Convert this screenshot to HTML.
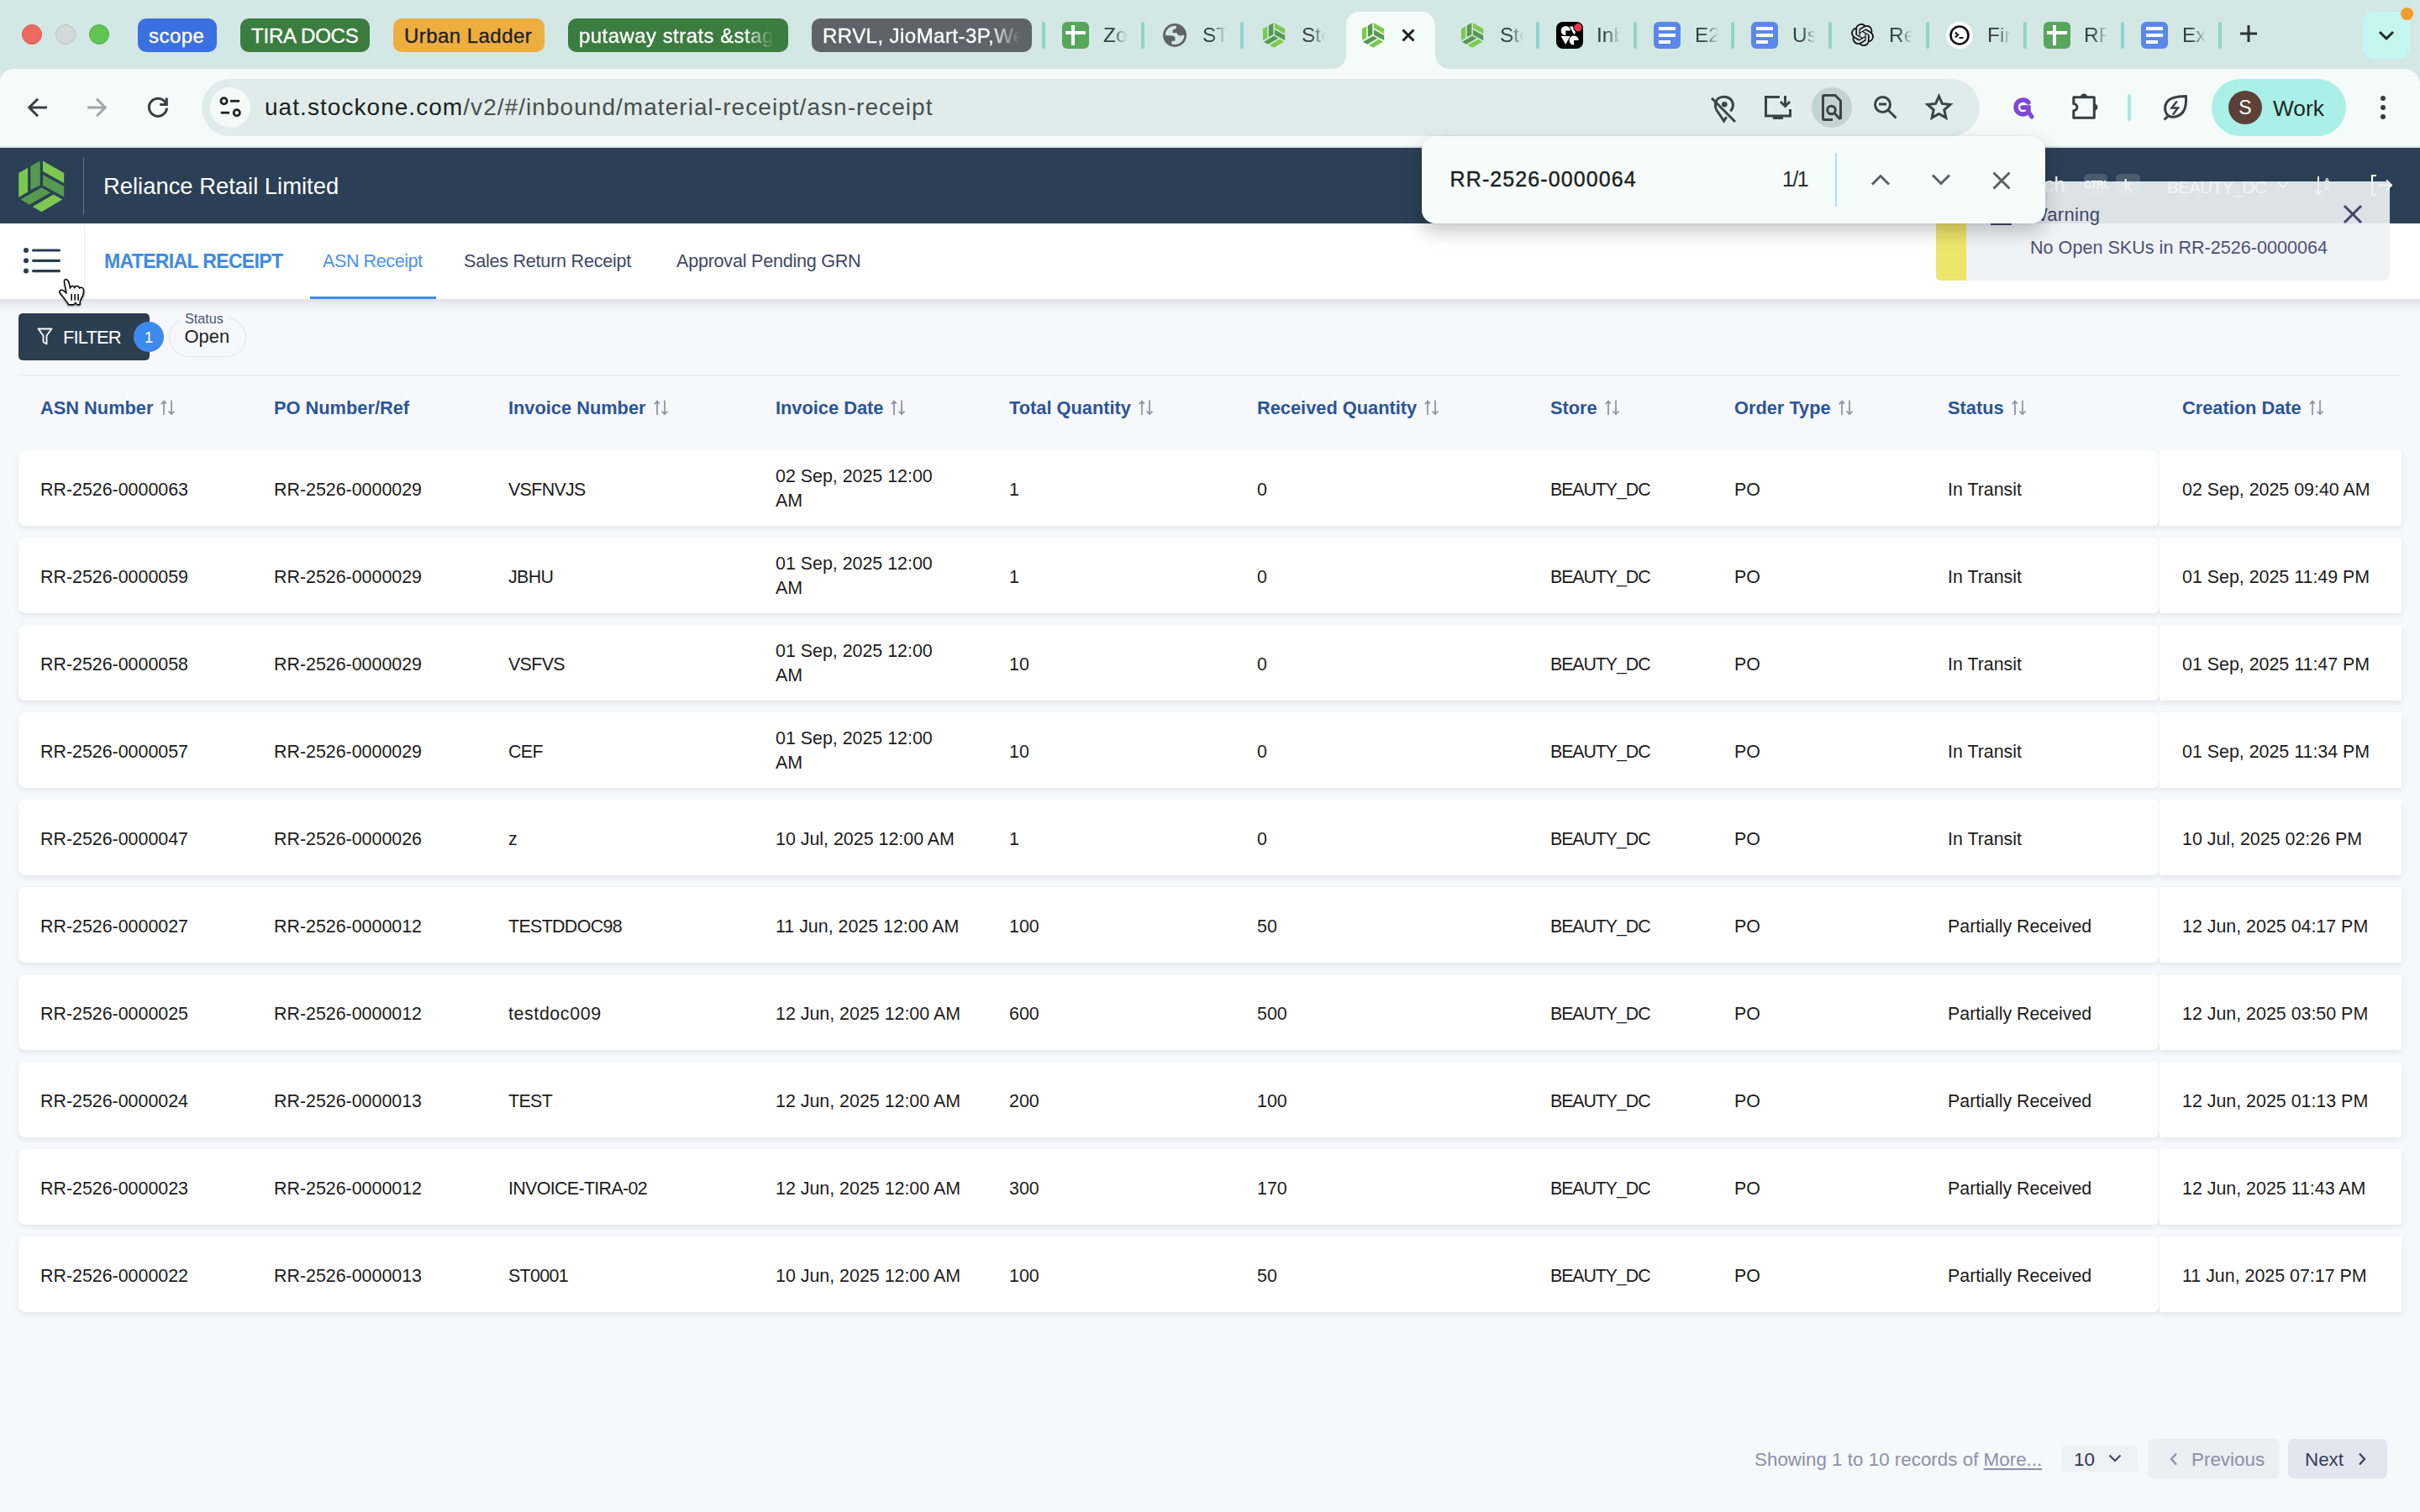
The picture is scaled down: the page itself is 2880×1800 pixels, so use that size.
<!DOCTYPE html>
<html><head><meta charset="utf-8">
<style>
*{box-sizing:border-box;margin:0;padding:0}
html,body{width:2880px;height:1800px;overflow:hidden;background:#f7f8fb;font-family:"Liberation Sans",sans-serif;position:relative}
.a{position:absolute}
svg{position:absolute;overflow:visible}
#tabstrip{position:absolute;left:0;top:0;width:2880px;height:100px;background:#d3e7e4}
#toolbar{position:absolute;left:0;top:82px;width:2880px;height:94px;background:#f5fbf9;border-radius:16px 18px 0 0}
.dot{position:absolute;top:29px;width:24px;height:24px;border-radius:50%}
.grp{position:absolute;top:22px;height:40px;border-radius:10px;font-size:24px;line-height:41px;white-space:nowrap;overflow:hidden;padding-left:13px;letter-spacing:0.45px;-webkit-text-stroke:0.35px currentColor}
.fade{-webkit-mask-image:linear-gradient(to right,#000 0,#000 calc(100% - 36px),transparent 100%)}
.sep{position:absolute;top:26px;width:4px;height:32px;background:#8fd4ca;border-radius:2px}
.tt{position:absolute;top:0;height:82px;line-height:83px;font-size:24.5px;color:#32403e;white-space:nowrap;overflow:hidden;width:28px;-webkit-mask-image:linear-gradient(to right,#000 40%,transparent 100%)}
.ic{position:absolute;top:26px;width:32px;height:32px;border-radius:6px}
.sheet{background:#58a65c}
.sheet:before{content:"";position:absolute;left:4px;top:11px;width:24px;height:4px;background:#fff}
.sheet:after{content:"";position:absolute;left:11px;top:4px;width:4px;height:24px;background:#fff}
.doc{background:#5a87ea}
.doc i{position:absolute;left:6px;height:4px;background:#fff}
#header{position:absolute;left:0;top:176px;width:2880px;height:90px;background:#2b4056}
#subnav{position:absolute;left:0;top:266px;width:2880px;height:90px;background:#fff}
.th{position:absolute;top:472.9px;font-size:21.8px;font-weight:bold;color:#2a5597;white-space:nowrap;line-height:26px}
.th svg{position:relative;display:inline-block;vertical-align:middle;margin-left:9px;top:-2px}
.row{position:absolute;left:22px;width:2548px;height:90px;background:#fff;border-radius:8px;box-shadow:0 3px 6px rgba(0,0,0,0.075)}
.rowst{position:absolute;left:2570px;width:288px;height:90px;background:#fff;border-radius:0 2px 2px 0;box-shadow:0 3px 6px rgba(0,0,0,0.075)}
.td{position:absolute;font-size:21.4px;color:#1c1c1c;white-space:nowrap;line-height:29px}
.td2{line-height:29px}
</style></head>
<body>
<div id="tabstrip">
  <div class="dot" style="left:26px;background:#ed6a5e;border:1px solid #d35a4f"></div>
  <div class="dot" style="left:66px;background:#d2d9d8;border:1px solid #b6bfbe"></div>
  <div class="dot" style="left:106px;background:#61c554;border:1px solid #4fae45"></div>
  <div class="grp" style="left:164px;width:94px;background:#3a70e0;color:#fff;padding-left:13px">scope</div>
  <div class="grp" style="left:286px;width:154px;background:#3b7c3f;color:#fff;letter-spacing:-0.2px">TIRA DOCS</div>
  <div class="grp" style="left:468px;width:180px;background:#eeae3f;color:#1e1e1e">Urban Ladder</div>
  <div class="grp" style="left:676px;width:262px;background:#3b7c3f;color:#fff"><span class="fade" style="display:block;width:232px;overflow:hidden">putaway strats &amp;stag</span></div>
  <div class="grp" style="left:966px;width:262px;background:#5f6368;color:#fff"><span class="fade" style="display:block;width:235px;overflow:hidden">RRVL, JioMart-3P,Wel</span></div>

  <div class="sep" style="left:1240px"></div>
  <div class="ic sheet" style="left:1264px"></div>
  <div class="tt" style="left:1313px">Zoho</div>
  <div class="sep" style="left:1358px"></div>
  <svg style="left:1375px;top:20px" width="50" height="45" viewBox="0 0 50 45"><circle cx="23.07" cy="21.9" r="12.6" fill="none" stroke="#5f6368" stroke-width="2.8"/><path fill="#5f6368" d="M25.2 9.8 L24.7 14 L20.8 15.5 L20.5 19 L25.6 19.3 C26 21.5 28 22.8 30 22.5 L35.36 21.34 A12.3 12.3 0 0 0 25.2 9.8 Z M10.77 22 L20.5 22.6 C22.5 23 23.5 24.5 23.5 25.3 L23.5 28.6 L19.6 28.9 L19 33.5 A12.3 12.3 0 0 1 10.77 22 Z"/></svg>
  <div class="tt" style="left:1431px">STO</div>
  <div class="sep" style="left:1476px"></div>
  <svg style="left:1502px;top:27px" width="28" height="30" viewBox="220 190 1000 1140"><g id="lg"><polygon points="225,465 425,350 425,880 225,995" fill="#7dc94f"/><polygon points="485,320 695,200 695,735 485,835" fill="#559a4d"/><polygon points="755,200 1220,465 1220,690 755,430" fill="#7dc94f"/><polygon points="755,505 1220,760 1220,990 755,740" fill="#559a4d"/><polygon points="265,1050 725,785 925,895 460,1165" fill="#559a4d"/><polygon points="530,1205 990,935 1185,1050 725,1320" fill="#7dc94f"/></g></svg>
  <div class="tt" style="left:1549px">Stock</div>

  <!-- active tab -->
  <svg style="left:1584px;top:14px" width="142" height="68" viewBox="0 0 142 68"><path d="M0 68 C10 68 18 62 18 50 L18 16 C18 7 25 0 34 0 L108 0 C117 0 124 7 124 16 L124 50 C124 62 132 68 142 68 Z" fill="#f5fbf9"/></svg>
  <svg style="left:1620px;top:27px" width="28" height="30" viewBox="220 190 1000 1140"><use href="#lg"/></svg>
  <svg style="left:1668px;top:34px" width="16" height="16" viewBox="0 0 16 16"><path d="M1.5 1.5 L14.5 14.5 M14.5 1.5 L1.5 14.5" stroke="#1f2221" stroke-width="3"/></svg>

  <svg style="left:1738px;top:27px" width="28" height="30" viewBox="220 190 1000 1140"><use href="#lg"/></svg>
  <div class="tt" style="left:1785px">Stock</div>
  <div class="sep" style="left:1828px"></div>
  <svg style="left:1852px;top:26px" width="32" height="32" viewBox="0 0 32 32"><rect width="32" height="32" rx="8" fill="#000"/><g fill="#fff"><path d="M11.3 10.5 L16.9 10.5 A5.6 5.6 0 1 0 11.3 16.1 Z"/><path d="M21.1 22 L26.7 22 A5.6 5.6 0 1 0 21.1 27.6 Z"/><path d="M5.6 16.9 L16.5 16.9 L11.3 27.1 Z"/><path d="M16 5.5 L20 5.5 L23.1 12.4 L21.3 15.3 Z"/></g><circle cx="26" cy="6.7" r="5.8" fill="#000"/><circle cx="26" cy="6.7" r="4.7" fill="#e8364a"/></svg>
  <div class="tt" style="left:1900px">Inbox</div>
  <div class="sep" style="left:1944px"></div>
  <div class="ic doc" style="left:1968px"><i style="top:6px;width:20px"></i><i style="top:14px;width:20px"></i><i style="top:22px;width:14px"></i></div>
  <div class="tt" style="left:2017px">E2E</div>
  <div class="sep" style="left:2060px"></div>
  <div class="ic doc" style="left:2084px"><i style="top:6px;width:20px"></i><i style="top:14px;width:20px"></i><i style="top:22px;width:14px"></i></div>
  <div class="tt" style="left:2133px">Usage</div>
  <div class="sep" style="left:2176px"></div>
  <svg style="left:2203px;top:28px" width="27" height="27" viewBox="0 0 24 24"><path fill="#111" d="M22.28 9.82a5.98 5.98 0 0 0-.52-4.91 6.05 6.05 0 0 0-6.51-2.9A6.07 6.07 0 0 0 4.98 4.18a5.98 5.98 0 0 0-4 2.9 6.05 6.05 0 0 0 .74 7.1 5.98 5.98 0 0 0 .51 4.91 6.05 6.05 0 0 0 6.51 2.9A5.98 5.98 0 0 0 13.26 24a6.06 6.06 0 0 0 5.77-4.21 5.99 5.99 0 0 0 4-2.9 6.06 6.06 0 0 0-.75-7.07zm-9.02 12.61a4.48 4.48 0 0 1-2.88-1.04l.14-.08 4.78-2.76a.8.8 0 0 0 .39-.68v-6.74l2.02 1.17a.07.07 0 0 1 .04.05v5.58a4.5 4.5 0 0 1-4.49 4.5zm-9.66-4.13a4.47 4.47 0 0 1-.54-3.01l.14.09 4.78 2.76a.77.77 0 0 0 .78 0l5.84-3.37v2.33a.08.08 0 0 1-.03.06L9.74 19.95a4.5 4.5 0 0 1-6.14-1.65zM2.34 7.9a4.49 4.49 0 0 1 2.37-1.97V11.6a.77.77 0 0 0 .39.68l5.81 3.35-2.02 1.17a.08.08 0 0 1-.07 0l-4.83-2.79A4.5 4.5 0 0 1 2.34 7.87zm16.6 3.86-5.84-3.39L15.12 7.2a.08.08 0 0 1 .07 0l4.83 2.79a4.49 4.49 0 0 1-.68 8.1v-5.68a.79.79 0 0 0-.4-.67zm2.01-3.02-.14-.09-4.77-2.78a.78.78 0 0 0-.79 0L9.41 9.23V6.9a.07.07 0 0 1 .03-.06l4.83-2.79a4.5 4.5 0 0 1 6.68 4.66zM8.31 12.86 6.29 11.7a.08.08 0 0 1-.04-.06V6.07a4.5 4.5 0 0 1 7.38-3.45l-.14.08L8.71 5.46a.8.8 0 0 0-.39.68zm1.1-2.37 2.6-1.5 2.6 1.5v3l-2.6 1.5-2.6-1.5z"/></svg>
  <div class="tt" style="left:2248px">Rels</div>
  <div class="sep" style="left:2292px"></div>
  <svg style="left:2316px;top:26px" width="32" height="32" viewBox="0 0 32 32"><circle cx="16" cy="16" r="16" fill="#fff"/><circle cx="16" cy="16" r="10.5" fill="none" stroke="#111" stroke-width="2.6"/><path d="M11 12.5 L14 15.5 L11 18.5 M15.5 19 L20.5 19" fill="none" stroke="#111" stroke-width="2.2"/></svg>
  <div class="tt" style="left:2365px">Find</div>
  <div class="sep" style="left:2408px"></div>
  <div class="ic sheet" style="left:2432px"></div>
  <div class="tt" style="left:2480px">RF</div>
  <div class="sep" style="left:2524px"></div>
  <div class="ic doc" style="left:2548px"><i style="top:6px;width:20px"></i><i style="top:14px;width:20px"></i><i style="top:22px;width:14px"></i></div>
  <div class="tt" style="left:2597px">Exe</div>
  <div class="sep" style="left:2640px"></div>
  <svg style="left:2664px;top:28px" width="24" height="24" viewBox="0 0 24 24"><path d="M12 2 V22 M2 12 H22" stroke="#2c3533" stroke-width="3"/></svg>
  <div class="a" style="left:2812px;top:14px;width:56px;height:56px;border-radius:14px;background:#c4f7f0"></div>
  <svg style="left:2829px;top:35px" width="22" height="14" viewBox="0 0 22 14"><path d="M3 3 L11 11 L19 3" fill="none" stroke="#222a29" stroke-width="3"/></svg>
  <div class="a" style="left:2857px;top:9px;width:15px;height:15px;border-radius:50%;background:#f59d2a"></div>
</div>
<div id="toolbar">
</div>
<div class="a" style="left:0;top:174px;width:2880px;height:2px;background:#d9e0df"></div>
<!-- nav buttons -->
<svg style="left:32px;top:116px" width="24" height="24" viewBox="0 0 24 24"><path d="M24 12 H3 M13 1.8 L2.8 12 L13 22.2" fill="none" stroke="#34403e" stroke-width="3"/></svg>
<svg style="left:104px;top:116px" width="24" height="24" viewBox="0 0 24 24"><path d="M0 12 H21 M11 1.8 L21.2 12 L11 22.2" fill="none" stroke="#a1a7a6" stroke-width="3"/></svg>
<svg style="left:176px;top:116px" width="24" height="24" viewBox="0 0 24 24"><path d="M22.56 12.72 A10.6 10.6 0 1 1 20.7 5.7 L22.3 8.5" fill="none" stroke="#34403e" stroke-width="3"/><path d="M22.3 0.4 V8.5 H14.3" fill="none" stroke="#34403e" stroke-width="3"/></svg>
<!-- url bar -->
<div class="a" style="left:240px;top:94px;width:2116px;height:68px;border-radius:34px;background:#dfecea"></div>
<div class="a" style="left:250px;top:104px;width:48px;height:48px;border-radius:50%;background:#f3faf8"></div>
<svg style="left:258px;top:112px" width="32" height="32" viewBox="0 0 32 32"><circle cx="8.5" cy="8.3" r="3.6" fill="none" stroke="#222" stroke-width="2.8"/><path d="M16 8.3 H27" stroke="#222" stroke-width="2.8"/><path d="M4.8 22.2 H15" stroke="#222" stroke-width="2.8"/><circle cx="23.8" cy="22.2" r="3.6" fill="none" stroke="#222" stroke-width="2.8"/></svg>
<div class="a" style="left:315px;top:106.3px;font-size:28px;line-height:44px;letter-spacing:1.05px;color:#474f4d;white-space:nowrap"><span style="color:#1b2321">uat.stockone.com</span>/v2/#/inbound/material-receipt/asn-receipt</div>
<!-- url bar icons -->
<svg style="left:2036px;top:114px" width="30" height="32" viewBox="0 0 30 32"><path d="M6.5 16.5 C4.5 12 5 5 10 2.5 C15 0 22 1 25 6 C27.5 10 26.5 14.5 23.5 18.5" fill="none" stroke="#3a4442" stroke-width="3"/><path d="M6.5 16.5 L15.6 30 L18.6 25.3" fill="none" stroke="#3a4442" stroke-width="3" stroke-linejoin="miter"/><circle cx="16.3" cy="10.2" r="3.3" fill="#3a4442"/><path d="M1 2.7 L29 31" stroke="#3a4442" stroke-width="3"/></svg>
<svg style="left:2100px;top:114px" width="32" height="28" viewBox="0 0 32 28"><path d="M18 1.5 H1.5 V24 H30.5 V16" fill="none" stroke="#3a4442" stroke-width="3"/><rect x="10" y="23" width="12" height="5" fill="#3a4442"/><path d="M24.5 0 V12 M19 7 L24.5 12.5 L30 7" fill="none" stroke="#3a4442" stroke-width="3"/></svg>
<div class="a" style="left:2156px;top:104px;width:48px;height:48px;border-radius:50%;background:#c4d3d0"></div>
<svg style="left:2168px;top:112px" width="24" height="32" viewBox="0 0 24 32"><path d="M13 30.5 H3 C2 30.5 1.5 30 1.5 29 V3 C1.5 2 2 1.5 3 1.5 H16 L22.5 8 V30" fill="none" stroke="#3a4442" stroke-width="3"/><circle cx="11.5" cy="19" r="4.8" fill="none" stroke="#3a4442" stroke-width="3"/><path d="M15 22.5 L22 30" stroke="#3a4442" stroke-width="3"/></svg>
<svg style="left:2230px;top:114px" width="28" height="28" viewBox="0 0 28 28"><circle cx="10.5" cy="10.5" r="9" fill="none" stroke="#3a4442" stroke-width="3"/><path d="M6 10 H15 M17 17 L26.5 26.5" stroke="#3a4442" stroke-width="3"/></svg>
<svg style="left:2292px;top:112px" width="31" height="30" viewBox="0 0 31 30"><path d="M15.50 2.60 L19.38 11.46 L29.01 12.41 L21.78 18.84 L23.85 28.29 L15.50 23.40 L7.15 28.29 L9.22 18.84 L1.99 12.41 L11.62 11.46 Z" fill="none" stroke="#3a4442" stroke-width="3" stroke-linejoin="miter"/></svg>
<!-- extensions -->
<svg style="left:2393px;top:113px" width="30" height="30" viewBox="0 0 30 30"><path d="M21 9 A8.5 8.5 0 1 0 21 20 L21 15 L14 15" fill="none" stroke="#fff" stroke-width="9" stroke-linecap="round"/><path d="M21 9 A8.5 8.5 0 1 0 21 20 L21 15 L14 15" fill="none" stroke="#7c48d8" stroke-width="5.5" stroke-linecap="round"/><path d="M21 20 L25 26" stroke="#7c48d8" stroke-width="5" stroke-linecap="round"/></svg>
<svg style="left:2462px;top:108px" width="36" height="36" viewBox="0 0 36 36"><path d="M5.8 7.8 H30.3 V32.3 H5.8 V23.7 A4.1 4.1 0 0 0 5.8 15.5 Z" fill="none" stroke="#34403e" stroke-width="3" stroke-linejoin="round"/><path d="M13.8 7.8 A4.2 4.2 0 0 1 22.2 7.8 Z M30.3 15.4 A4.2 4.2 0 0 1 30.3 23.8 Z" fill="#34403e"/></svg>
<div class="a" style="left:2532px;top:112px;width:4px;height:32px;border-radius:2px;background:#a6e9e1"></div>
<svg style="left:2572px;top:112px" width="32" height="32" viewBox="0 0 32 32"><path d="M29.5 2.5 C29.8 9 29.5 15 27 19.5 C24 25.5 16 29 10 26.5 C4.5 24 3 16 6.5 10 C10 4.5 18 2.5 29.5 2.5 Z" fill="none" stroke="#34403e" stroke-width="3" stroke-linejoin="round"/><path d="M9.5 25 L3.5 30.5" stroke="#34403e" stroke-width="3"/><path d="M18.8 8.5 L12.5 16.5 H20 L13.8 24.5" fill="none" stroke="#34403e" stroke-width="2.4" stroke-linejoin="miter"/></svg>
<div class="a" style="left:2632px;top:94px;width:160px;height:68px;border-radius:34px;background:#abf0e8"></div>
<div class="a" style="left:2652px;top:108px;width:40px;height:40px;border-radius:50%;background:#5d4038;color:#fff;font-size:23px;line-height:41px;text-align:center">S</div>
<div class="a" style="left:2705px;top:108.9px;font-size:26.3px;line-height:40px;color:#1b2523;white-space:nowrap">Work</div>
<div class="a" style="left:2833px;top:114px;width:6px;height:6px;border-radius:50%;background:#34403e"></div>
<div class="a" style="left:2833px;top:125px;width:6px;height:6px;border-radius:50%;background:#34403e"></div>
<div class="a" style="left:2833px;top:136px;width:6px;height:6px;border-radius:50%;background:#34403e"></div>
<div id="header"></div>
<svg style="left:22px;top:190.5px" width="54.2" height="61.8" viewBox="220 190 1000 1140"><use href="#lg"/></svg>
<div class="a" style="left:98.8px;top:187px;width:1.5px;height:68px;background:#61748b"></div>
<div class="a" style="left:123px;top:203.7px;font-size:27.4px;line-height:36px;color:#fff;white-space:nowrap">Reliance Retail Limited</div>
<!-- header right items (under overlays) -->
<div class="a" style="left:2383px;top:203px;font-size:23.5px;line-height:34px;color:#fff;white-space:nowrap">Search</div>
<div class="a" style="left:2480px;top:207px;width:28px;height:27px;border-radius:5px;background:rgba(255,255,255,0.15);color:#fff;font-size:12px;font-weight:bold;line-height:27px;text-align:center;letter-spacing:-0.5px">CTRL</div>
<div class="a" style="left:2518px;top:207px;width:29px;height:27px;border-radius:5px;background:rgba(255,255,255,0.15);color:#fff;font-size:21px;line-height:27px;text-align:center">k</div>
<div class="a" style="left:2579px;top:206.7px;font-size:21px;line-height:32px;color:#fff;white-space:nowrap;letter-spacing:-0.9px">BEAUTY_DC</div>
<svg style="left:2710px;top:216px" width="14" height="9" viewBox="0 0 14 9"><path d="M1 1 L7 7 L13 1" fill="none" stroke="#fff" stroke-width="1.6"/></svg>
<svg style="left:2755px;top:209px" width="24" height="24" viewBox="0 0 24 24"><path d="M4 1 V22 M0.5 18 L4 22.5 L7.5 18" fill="none" stroke="#fff" stroke-width="1.8"/><text x="11" y="8.5" font-size="9" fill="#fff" font-family="Liberation Sans" font-weight="bold">A</text><text x="11" y="17" font-size="9.5" fill="#fff" font-family="Liberation Sans" font-weight="bold">Z</text></svg>
<svg style="left:2820px;top:208px" width="28" height="25" viewBox="0 0 28 25"><path d="M8 1 H3 V24 H8" fill="none" stroke="#fff" stroke-width="2"/><path d="M10 12.5 H26 M20 6.5 L26 12.5 L20 18.5" fill="none" stroke="#fff" stroke-width="2"/></svg>

<div id="subnav"></div>
<div class="a" style="left:0;top:356px;width:2880px;height:16px;background:linear-gradient(to bottom,rgba(20,25,60,0.105),rgba(20,25,60,0.05) 40%,rgba(20,25,60,0))"></div>
<svg style="left:27px;top:294px" width="46" height="32" viewBox="0 0 46 32"><g fill="#2c3e50"><circle cx="4" cy="4" r="3"/><circle cx="4" cy="16.3" r="3"/><circle cx="4" cy="28.6" r="3"/></g><g stroke="#2c3e50" stroke-width="3.2" stroke-linecap="round"><path d="M12.5 4 H43.5 M12.5 16.3 H43.5 M12.5 28.6 H43.5"/></g></svg>
<div class="a" style="left:100px;top:266px;width:1px;height:90px;background:#eceff3"></div>
<div class="a" style="left:124px;top:296.8px;font-size:23px;font-weight:bold;line-height:28px;color:#3b8ae6;white-space:nowrap;letter-spacing:-0.65px">MATERIAL RECEIPT</div>
<div class="a" style="left:384px;top:296.7px;font-size:21.6px;line-height:28px;color:#4b94f0;white-space:nowrap;letter-spacing:-0.45px">ASN Receipt</div>
<div class="a" style="left:369px;top:353px;width:150px;height:3px;background:#3d8af0"></div>
<div class="a" style="left:552px;top:296.7px;font-size:21.6px;line-height:28px;color:#3f4866;white-space:nowrap;letter-spacing:-0.25px">Sales Return Receipt</div>
<div class="a" style="left:805px;top:296.7px;font-size:21.6px;line-height:28px;color:#3f4866;white-space:nowrap;letter-spacing:-0.25px">Approval Pending GRN</div>

<!-- filter -->
<div class="a" style="left:22px;top:373px;width:156px;height:56px;border-radius:5px;background:#2c3e50"></div>
<svg style="left:44px;top:390px" width="19" height="21" viewBox="0 0 19 21"><path d="M1.5 1.5 H17.5 L11.5 9.5 V19.5 L7.5 17 V9.5 Z" fill="none" stroke="#fff" stroke-width="1.8" stroke-linejoin="round"/></svg>
<div class="a" style="left:75px;top:388.4px;font-size:22px;line-height:28px;color:#fff;white-space:nowrap;letter-spacing:-0.9px">FILTER</div>
<div class="a" style="left:159px;top:383px;width:36px;height:36px;border-radius:50%;background:#3d89ef;color:#fff;font-size:19px;line-height:37px;text-align:center">1</div>
<div class="a" style="left:200.5px;top:378px;width:92px;height:47px;border-radius:24px;border:1px solid #dfe2e7"></div>
<div class="a" style="left:214px;top:375px;width:58px;height:7px;background:#f7f8fb"></div>
<div class="a" style="left:220px;top:369px;font-size:16.2px;line-height:20px;color:#4a5380;white-space:nowrap">Status</div>
<div class="a" style="left:219.5px;top:387.2px;font-size:21.9px;line-height:28px;color:#222;white-space:nowrap">Open</div>

<!-- table header -->
<div class="a" style="left:22px;top:446px;width:2836px;height:1px;background:#e9ecf0"></div>
<div class="th" style="left:48px">ASN Number<svg width="17" height="19" viewBox="0 0 17 19"><path d="M4 18 V1.5 M0.8 5.2 L4 1.5 L6.8 4.6 M13 0.5 V17 M9.5 13.5 L13 17 L16.5 13.5" fill="none" stroke="#8b8fa8" stroke-width="1.7"/></svg></div>
<div class="th" style="left:326px">PO Number/Ref</div>
<div class="th" style="left:605px">Invoice Number<svg width="17" height="19" viewBox="0 0 17 19"><path d="M4 18 V1.5 M0.8 5.2 L4 1.5 L6.8 4.6 M13 0.5 V17 M9.5 13.5 L13 17 L16.5 13.5" fill="none" stroke="#8b8fa8" stroke-width="1.7"/></svg></div>
<div class="th" style="left:923px">Invoice Date<svg width="17" height="19" viewBox="0 0 17 19"><path d="M4 18 V1.5 M0.8 5.2 L4 1.5 L6.8 4.6 M13 0.5 V17 M9.5 13.5 L13 17 L16.5 13.5" fill="none" stroke="#8b8fa8" stroke-width="1.7"/></svg></div>
<div class="th" style="left:1201px">Total Quantity<svg width="17" height="19" viewBox="0 0 17 19"><path d="M4 18 V1.5 M0.8 5.2 L4 1.5 L6.8 4.6 M13 0.5 V17 M9.5 13.5 L13 17 L16.5 13.5" fill="none" stroke="#8b8fa8" stroke-width="1.7"/></svg></div>
<div class="th" style="left:1496px">Received Quantity<svg width="17" height="19" viewBox="0 0 17 19"><path d="M4 18 V1.5 M0.8 5.2 L4 1.5 L6.8 4.6 M13 0.5 V17 M9.5 13.5 L13 17 L16.5 13.5" fill="none" stroke="#8b8fa8" stroke-width="1.7"/></svg></div>
<div class="th" style="left:1845px">Store<svg width="17" height="19" viewBox="0 0 17 19"><path d="M4 18 V1.5 M0.8 5.2 L4 1.5 L6.8 4.6 M13 0.5 V17 M9.5 13.5 L13 17 L16.5 13.5" fill="none" stroke="#8b8fa8" stroke-width="1.7"/></svg></div>
<div class="th" style="left:2064px">Order Type<svg width="17" height="19" viewBox="0 0 17 19"><path d="M4 18 V1.5 M0.8 5.2 L4 1.5 L6.8 4.6 M13 0.5 V17 M9.5 13.5 L13 17 L16.5 13.5" fill="none" stroke="#8b8fa8" stroke-width="1.7"/></svg></div>
<div class="th" style="left:2318px">Status<svg width="17" height="19" viewBox="0 0 17 19"><path d="M4 18 V1.5 M0.8 5.2 L4 1.5 L6.8 4.6 M13 0.5 V17 M9.5 13.5 L13 17 L16.5 13.5" fill="none" stroke="#8b8fa8" stroke-width="1.7"/></svg></div>
<div class="th" style="left:2597px">Creation Date<svg width="17" height="19" viewBox="0 0 17 19"><path d="M4 18 V1.5 M0.8 5.2 L4 1.5 L6.8 4.6 M13 0.5 V17 M9.5 13.5 L13 17 L16.5 13.5" fill="none" stroke="#8b8fa8" stroke-width="1.7"/></svg></div>
<div class="row" style="top:536px"></div><div class="rowst" style="top:536px"></div>
<div class="td" style="left:48px;top:568.6px">RR-2526-0000063</div>
<div class="td" style="left:326px;top:568.6px">RR-2526-0000029</div>
<div class="td" style="left:605px;top:568.6px;letter-spacing:-0.65px">VSFNVJS</div>
<div class="td td2" style="left:923px;top:553.1px">02 Sep, 2025 12:00<br>AM</div>
<div class="td" style="left:1201px;top:568.6px">1</div>
<div class="td" style="left:1496px;top:568.6px">0</div>
<div class="td" style="left:1845px;top:568.6px;letter-spacing:-1.1px">BEAUTY_DC</div>
<div class="td" style="left:2064px;top:568.6px">PO</div>
<div class="td" style="left:2318px;top:568.6px">In Transit</div>
<div class="td" style="left:2597px;top:568.6px">02 Sep, 2025 09:40 AM</div>
<div class="row" style="top:640px"></div><div class="rowst" style="top:640px"></div>
<div class="td" style="left:48px;top:672.6px">RR-2526-0000059</div>
<div class="td" style="left:326px;top:672.6px">RR-2526-0000029</div>
<div class="td" style="left:605px;top:672.6px;letter-spacing:-0.65px">JBHU</div>
<div class="td td2" style="left:923px;top:657.1px">01 Sep, 2025 12:00<br>AM</div>
<div class="td" style="left:1201px;top:672.6px">1</div>
<div class="td" style="left:1496px;top:672.6px">0</div>
<div class="td" style="left:1845px;top:672.6px;letter-spacing:-1.1px">BEAUTY_DC</div>
<div class="td" style="left:2064px;top:672.6px">PO</div>
<div class="td" style="left:2318px;top:672.6px">In Transit</div>
<div class="td" style="left:2597px;top:672.6px">01 Sep, 2025 11:49 PM</div>
<div class="row" style="top:744px"></div><div class="rowst" style="top:744px"></div>
<div class="td" style="left:48px;top:776.6px">RR-2526-0000058</div>
<div class="td" style="left:326px;top:776.6px">RR-2526-0000029</div>
<div class="td" style="left:605px;top:776.6px;letter-spacing:-0.65px">VSFVS</div>
<div class="td td2" style="left:923px;top:761.1px">01 Sep, 2025 12:00<br>AM</div>
<div class="td" style="left:1201px;top:776.6px">10</div>
<div class="td" style="left:1496px;top:776.6px">0</div>
<div class="td" style="left:1845px;top:776.6px;letter-spacing:-1.1px">BEAUTY_DC</div>
<div class="td" style="left:2064px;top:776.6px">PO</div>
<div class="td" style="left:2318px;top:776.6px">In Transit</div>
<div class="td" style="left:2597px;top:776.6px">01 Sep, 2025 11:47 PM</div>
<div class="row" style="top:848px"></div><div class="rowst" style="top:848px"></div>
<div class="td" style="left:48px;top:880.6px">RR-2526-0000057</div>
<div class="td" style="left:326px;top:880.6px">RR-2526-0000029</div>
<div class="td" style="left:605px;top:880.6px;letter-spacing:-0.65px">CEF</div>
<div class="td td2" style="left:923px;top:865.1px">01 Sep, 2025 12:00<br>AM</div>
<div class="td" style="left:1201px;top:880.6px">10</div>
<div class="td" style="left:1496px;top:880.6px">0</div>
<div class="td" style="left:1845px;top:880.6px;letter-spacing:-1.1px">BEAUTY_DC</div>
<div class="td" style="left:2064px;top:880.6px">PO</div>
<div class="td" style="left:2318px;top:880.6px">In Transit</div>
<div class="td" style="left:2597px;top:880.6px">01 Sep, 2025 11:34 PM</div>
<div class="row" style="top:952px"></div><div class="rowst" style="top:952px"></div>
<div class="td" style="left:48px;top:984.6px">RR-2526-0000047</div>
<div class="td" style="left:326px;top:984.6px">RR-2526-0000026</div>
<div class="td" style="left:605px;top:984.6px">z</div>
<div class="td" style="left:923px;top:984.6px">10 Jul, 2025 12:00 AM</div>
<div class="td" style="left:1201px;top:984.6px">1</div>
<div class="td" style="left:1496px;top:984.6px">0</div>
<div class="td" style="left:1845px;top:984.6px;letter-spacing:-1.1px">BEAUTY_DC</div>
<div class="td" style="left:2064px;top:984.6px">PO</div>
<div class="td" style="left:2318px;top:984.6px">In Transit</div>
<div class="td" style="left:2597px;top:984.6px">10 Jul, 2025 02:26 PM</div>
<div class="row" style="top:1056px"></div><div class="rowst" style="top:1056px"></div>
<div class="td" style="left:48px;top:1088.6px">RR-2526-0000027</div>
<div class="td" style="left:326px;top:1088.6px">RR-2526-0000012</div>
<div class="td" style="left:605px;top:1088.6px;letter-spacing:-0.65px">TESTDDOC98</div>
<div class="td" style="left:923px;top:1088.6px">11 Jun, 2025 12:00 AM</div>
<div class="td" style="left:1201px;top:1088.6px">100</div>
<div class="td" style="left:1496px;top:1088.6px">50</div>
<div class="td" style="left:1845px;top:1088.6px;letter-spacing:-1.1px">BEAUTY_DC</div>
<div class="td" style="left:2064px;top:1088.6px">PO</div>
<div class="td" style="left:2318px;top:1088.6px">Partially Received</div>
<div class="td" style="left:2597px;top:1088.6px">12 Jun, 2025 04:17 PM</div>
<div class="row" style="top:1160px"></div><div class="rowst" style="top:1160px"></div>
<div class="td" style="left:48px;top:1192.6px">RR-2526-0000025</div>
<div class="td" style="left:326px;top:1192.6px">RR-2526-0000012</div>
<div class="td" style="left:605px;top:1192.6px;letter-spacing:0.6px">testdoc009</div>
<div class="td" style="left:923px;top:1192.6px">12 Jun, 2025 12:00 AM</div>
<div class="td" style="left:1201px;top:1192.6px">600</div>
<div class="td" style="left:1496px;top:1192.6px">500</div>
<div class="td" style="left:1845px;top:1192.6px;letter-spacing:-1.1px">BEAUTY_DC</div>
<div class="td" style="left:2064px;top:1192.6px">PO</div>
<div class="td" style="left:2318px;top:1192.6px">Partially Received</div>
<div class="td" style="left:2597px;top:1192.6px">12 Jun, 2025 03:50 PM</div>
<div class="row" style="top:1264px"></div><div class="rowst" style="top:1264px"></div>
<div class="td" style="left:48px;top:1296.6px">RR-2526-0000024</div>
<div class="td" style="left:326px;top:1296.6px">RR-2526-0000013</div>
<div class="td" style="left:605px;top:1296.6px;letter-spacing:-0.65px">TEST</div>
<div class="td" style="left:923px;top:1296.6px">12 Jun, 2025 12:00 AM</div>
<div class="td" style="left:1201px;top:1296.6px">200</div>
<div class="td" style="left:1496px;top:1296.6px">100</div>
<div class="td" style="left:1845px;top:1296.6px;letter-spacing:-1.1px">BEAUTY_DC</div>
<div class="td" style="left:2064px;top:1296.6px">PO</div>
<div class="td" style="left:2318px;top:1296.6px">Partially Received</div>
<div class="td" style="left:2597px;top:1296.6px">12 Jun, 2025 01:13 PM</div>
<div class="row" style="top:1368px"></div><div class="rowst" style="top:1368px"></div>
<div class="td" style="left:48px;top:1400.6px">RR-2526-0000023</div>
<div class="td" style="left:326px;top:1400.6px">RR-2526-0000012</div>
<div class="td" style="left:605px;top:1400.6px;letter-spacing:-0.65px">INVOICE-TIRA-02</div>
<div class="td" style="left:923px;top:1400.6px">12 Jun, 2025 12:00 AM</div>
<div class="td" style="left:1201px;top:1400.6px">300</div>
<div class="td" style="left:1496px;top:1400.6px">170</div>
<div class="td" style="left:1845px;top:1400.6px;letter-spacing:-1.1px">BEAUTY_DC</div>
<div class="td" style="left:2064px;top:1400.6px">PO</div>
<div class="td" style="left:2318px;top:1400.6px">Partially Received</div>
<div class="td" style="left:2597px;top:1400.6px">12 Jun, 2025 11:43 AM</div>
<div class="row" style="top:1472px"></div><div class="rowst" style="top:1472px"></div>
<div class="td" style="left:48px;top:1504.6px">RR-2526-0000022</div>
<div class="td" style="left:326px;top:1504.6px">RR-2526-0000013</div>
<div class="td" style="left:605px;top:1504.6px;letter-spacing:-0.65px">ST0001</div>
<div class="td" style="left:923px;top:1504.6px">10 Jun, 2025 12:00 AM</div>
<div class="td" style="left:1201px;top:1504.6px">100</div>
<div class="td" style="left:1496px;top:1504.6px">50</div>
<div class="td" style="left:1845px;top:1504.6px;letter-spacing:-1.1px">BEAUTY_DC</div>
<div class="td" style="left:2064px;top:1504.6px">PO</div>
<div class="td" style="left:2318px;top:1504.6px">Partially Received</div>
<div class="td" style="left:2597px;top:1504.6px">11 Jun, 2025 07:17 PM</div>
<!-- pagination -->
<div class="a" style="left:2088px;top:1723px;font-size:22.4px;line-height:30px;color:#8b90a8;white-space:nowrap">Showing 1 to 10 records of <span style="text-decoration:underline;text-underline-offset:3px">More...</span></div>
<div class="a" style="left:2454px;top:1721px;width:90px;height:31px;border-radius:4px;background:#eef1f4"></div>
<div class="a" style="left:2468px;top:1723px;font-size:22.4px;line-height:30px;color:#2f3656">10</div>
<svg style="left:2509px;top:1731px" width="16" height="10" viewBox="0 0 16 10"><path d="M1.5 1.5 L8 8 L14.5 1.5" fill="none" stroke="#3b4262" stroke-width="2"/></svg>
<div class="a" style="left:2556px;top:1713px;width:157px;height:47px;border-radius:6px;background:#eceef3"></div>
<svg style="left:2582px;top:1729px" width="10" height="16" viewBox="0 0 10 16"><path d="M8 1.5 L2 8 L8 14.5" fill="none" stroke="#8b90a8" stroke-width="2.2"/></svg>
<div class="a" style="left:2608px;top:1723px;font-size:22.4px;line-height:30px;color:#8b90a8;white-space:nowrap">Previous</div>
<div class="a" style="left:2723px;top:1713px;width:118px;height:47px;border-radius:6px;background:#e3e6ee"></div>
<div class="a" style="left:2743px;top:1723px;font-size:22.4px;line-height:30px;color:#353c5c;white-space:nowrap">Next</div>
<svg style="left:2806px;top:1729px" width="10" height="16" viewBox="0 0 10 16"><path d="M2 1.5 L8 8 L2 14.5" fill="none" stroke="#353c5c" stroke-width="2.2"/></svg>

<!-- toast -->
<div class="a" style="left:2304px;top:216px;width:540px;height:118px;border-radius:6px;background:#eff2f5;opacity:0.91;overflow:hidden">
  <div class="a" style="left:0;top:0;width:36px;height:118px;background:#ede35d"></div>
</div>
<div class="a" style="left:2369px;top:236px;width:25px;height:32px;border-bottom:3px solid #3f4866"></div>
<div class="a" style="left:2416px;top:242.1px;font-size:22px;line-height:28px;color:#3f476a;white-space:nowrap;letter-spacing:0.3px">Warning</div>
<svg style="left:2788px;top:243px" width="24" height="24" viewBox="0 0 24 24"><path d="M2 2 L22 22 M22 2 L2 22" stroke="#3f4866" stroke-width="3"/></svg>
<div class="a" style="left:2416px;top:281.2px;font-size:21.6px;line-height:28px;color:#4a5275;white-space:nowrap">No Open SKUs in RR-2526-0000064</div>

<!-- find popup -->
<div class="a" style="left:1692px;top:162px;width:742px;height:104px;border-radius:16px;background:#f6fcfa;box-shadow:0 10px 22px rgba(0,0,0,0.22),0 0 2px rgba(0,0,0,0.08)"></div>
<div class="a" style="left:1725.6px;top:198.3px;font-size:25px;line-height:30px;color:#1b2120;white-space:nowrap;letter-spacing:1.1px;-webkit-text-stroke:0.4px #1b2120">RR-2526-0000064</div>
<div class="a" style="left:2121px;top:198px;font-size:25px;line-height:30px;color:#2a302f;white-space:nowrap;letter-spacing:-1.5px">1/1</div>
<div class="a" style="left:2184px;top:182px;width:2px;height:64px;background:#a3e9e0"></div>
<svg style="left:2226px;top:207px" width="24" height="14" viewBox="0 0 24 14"><path d="M2 12.5 L12 2.5 L22 12.5" fill="none" stroke="#596160" stroke-width="3"/></svg>
<svg style="left:2298px;top:207px" width="24" height="14" viewBox="0 0 24 14"><path d="M2 1.5 L12 11.5 L22 1.5" fill="none" stroke="#596160" stroke-width="3"/></svg>
<svg style="left:2371px;top:204px" width="22" height="22" viewBox="0 0 22 22"><path d="M1.5 1.5 L20.5 20.5 M20.5 1.5 L1.5 20.5" stroke="#596160" stroke-width="3"/></svg>

<!-- cursor -->
<svg style="left:60px;top:320px;filter:drop-shadow(0 1.5px 1.2px rgba(0,0,0,0.45))" width="50" height="50" viewBox="0 0 1512 1512"><path d="M575 880 C560 760 510 560 500 470 C490 400 540 370 575 385 C620 400 650 440 670 520 L710 700 C740 600 840 590 865 690 C890 600 1010 590 1045 700 C1080 660 1180 660 1195 760 C1210 880 1170 1000 1090 1110 C1060 1160 1060 1230 1060 1290 L960 1290 L905 1220 L840 1290 L650 1290 C630 1230 590 1180 520 1100 L340 860 C300 800 380 740 440 770 C490 800 540 840 575 880 Z" fill="#fff" stroke="#000" stroke-width="44" stroke-linejoin="round"/><path d="M760 910 V1140 M880 910 V1140 M1000 910 V1140" stroke="#000" stroke-width="46"/></svg>
</body></html>
